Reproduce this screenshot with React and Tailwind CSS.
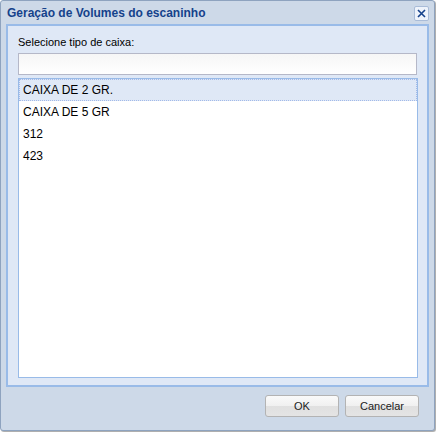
import React from 'react';

const items = ['CAIXA DE 2 GR.', 'CAIXA DE 5 GR', '312', '423'];

const App = () => {
  return (
    <div className="w-[436px] h-[432px] bg-white" style={{ fontFamily: '"Liberation Sans", Arial, sans-serif' }}>
      <div className="w-[435px] h-[431px] flex flex-col bg-[#cdd9e8] border border-[#8ea3bf] rounded-[3px] shadow-[1px_1px_1px_rgba(0,0,0,0.35)]">
        {/* header */}
        <div className="h-[23px] flex items-center justify-between pl-[6px] pr-[5px]">
          <span className="text-[12px] font-bold text-[#15428b] leading-none mt-[1px]">
            Geração de Volumes do escaninho
          </span>
          <button className="w-[15px] h-[15px] mt-[1px] flex items-center justify-center bg-[#eef3fb] border border-[#a9bcd8] rounded-[2px]">
            <svg width="9" height="9" viewBox="0 0 9 9">
              <path d="M1 1L8 8M8 1L1 8" stroke="#15428b" strokeWidth="1.6" />
            </svg>
          </button>
        </div>

        {/* body */}
        <div className="mx-[5px] h-[363px] bg-[#dfe8f6] border-2 border-[#99bbe8] pl-[10px] pr-[10px] pt-[11px]">
          <label className="block text-[11px] text-black leading-none h-[16px]">Selecione tipo de caixa:</label>
          <input
            className="block w-[399px] h-[22px] border border-[#b5b8c8] bg-gradient-to-b from-[#f6f6f6] to-white outline-none"
            type="text"
          />
          <div className="mt-[3px] w-[400px] h-[300px] bg-white border border-[#99bbe8]">
            {items.map((item, index) => (
              <div
                key={index}
                className={`h-[22px] flex items-center px-[3px] text-[12px] text-black ${
                  index === 0 ? 'bg-[#dfe8f6] border border-dotted border-[#a3bae9]' : 'border border-transparent'
                }`}
              >
                {item}
              </div>
            ))}
          </div>
        </div>

        {/* footer */}
        <div className="flex justify-end gap-[6px] pt-[8px] pr-[15px]">
          <button className="w-[74px] h-[22px] text-[11px] text-[#222] border border-[#b3b3b3] rounded-[3px] bg-[linear-gradient(#fafafa_0%,#f0f0f0_50%,#e0e0e0_50%,#e4e4e4_100%)]">
            OK
          </button>
          <button className="w-[74px] h-[22px] text-[11px] text-[#222] border border-[#b3b3b3] rounded-[3px] bg-[linear-gradient(#fafafa_0%,#f0f0f0_50%,#e0e0e0_50%,#e4e4e4_100%)]">
            Cancelar
          </button>
        </div>
      </div>
    </div>
  );
};

export default App;
